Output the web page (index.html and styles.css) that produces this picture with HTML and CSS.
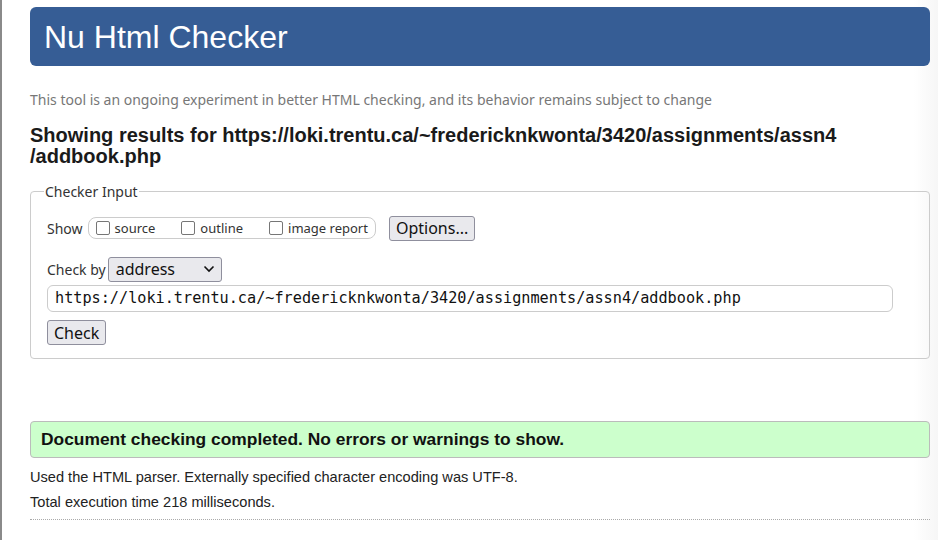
FILE: index.html
```html
<!DOCTYPE html>
<html lang="en">
<head>
<meta charset="utf-8">
<title>Showing results for https://loki.trentu.ca/~fredericknkwonta/3420/assignments/assn4/addbook.php - Nu Html Checker</title>
<link rel="stylesheet" href="styles.css">
</head>
<body>
<div class="page">
  <h1 class="banner">Nu Html Checker</h1>
  <p class="intro">This tool is an ongoing experiment in better HTML checking, and its behavior remains subject to change</p>
  <h2 class="results-title">Showing results for https://loki.trentu.ca/~fredericknkwonta/3420/assignments/assn4<br>/addbook.php</h2>
  <form class="checker">
    <fieldset class="checker-input">
      <legend>Checker Input</legend>
      <div class="row show-row">
        <span class="label">Show</span>
        <span class="show-group">
          <label class="opt"><span class="box"></span>source</label>
          <label class="opt"><span class="box"></span>outline</label>
          <label class="opt"><span class="box"></span>image report</label>
        </span>
        <button type="button" class="btn options">Options...</button>
      </div>
      <div class="row checkby-row">
        <span class="label">Check by</span>
        <span class="select">address
          <svg class="chev" width="12" height="8" viewBox="0 0 12 8"><path d="M1.5 1.5 L6 6 L10.5 1.5" fill="none" stroke="#111" stroke-width="1.6"/></svg>
        </span>
      </div>
      <div class="url">https://loki.trentu.ca/~fredericknkwonta/3420/assignments/assn4/addbook.php</div>
      <button type="button" class="btn check">Check</button>
    </fieldset>
  </form>
  <p class="success">Document checking completed. No errors or warnings to show.</p>
  <p class="details first">Used the HTML parser. Externally specified character encoding was UTF-8.</p>
  <p class="details">Total execution time 218 milliseconds.</p>
  <hr class="dotted">
</div>
</body>
</html>
```
FILE: styles.css
```css
html, body {
  margin: 0;
  padding: 0;
  background: #fff;
}
body {
  font-family: "Liberation Sans", Arial, sans-serif;
  color: #222;
}
.page {
  border-left: 2px solid #8a8a8a;
  min-height: 540px;
  box-sizing: border-box;
  padding: 7px 8px 0 28px;
  background: linear-gradient(to right, #fff 0, #fff calc(100% - 24px), #f6f6f6 100%);
}
.banner {
  margin: 0;
  height: 59px;
  box-sizing: border-box;
  background: #365d95;
  color: #fff;
  border-radius: 6px;
  font-weight: normal;
  font-size: 32px;
  line-height: 60px;
  padding-left: 14px;
}
.intro {
  margin: 24px 0 0;
  font-family: "Noto Sans", "Open Sans", sans-serif;
  font-size: 14px;
  line-height: 19px;
  color: #777;
}
.results-title {
  margin: 16px 0 0;
  font-size: 20px;
  line-height: 21px;
  color: #1a1a1a;
}
.checker { margin: 15px 0 0; }
.checker-input {
  margin: 0;
  border: 1px solid #ccc;
  border-radius: 4px;
  padding: 13px 16px 13px 16px;
  font-family: "Noto Sans", "Open Sans", sans-serif;
  font-size: 14px;
  color: #333;
}
.checker-input legend {
  padding: 0 1px;
  margin-left: -3px;
  font-size: 14px;
}
.row {
  display: flex;
  align-items: center;
}
.show-row { height: 28px; }
.label { margin-right: 5px; }
.show-group {
  display: inline-flex;
  align-items: center;
  height: 22px;
  box-sizing: border-box;
  border: 1px solid #ccc;
  border-radius: 8px;
  padding: 0 7px 0 7px;
  margin-right: 13px;
  font-size: 13px;
}
.opt {
  display: inline-flex;
  align-items: center;
  margin-right: 26px;
}
.opt:last-child { margin-right: 0; }
.box {
  display: inline-block;
  width: 14px;
  height: 14px;
  box-sizing: border-box;
  border: 1px solid #767676;
  border-radius: 2px;
  margin-right: 5px;
  background: #fff;
}
.btn {
  font-family: "Noto Sans", "Open Sans", sans-serif;
  font-size: 16px;
  color: #111;
  background: #e9e9ed;
  border: 1px solid #8f8f9d;
  border-radius: 3px;
  padding: 0 6px;
  height: 25px;
  line-height: 22px;
}
.checkby-row { margin-top: 14px; height: 26px; }
.label-check { margin-right: 2px; }
.select {
  display: inline-flex;
  align-items: center;
  justify-content: space-between;
  box-sizing: border-box;
  width: 114px;
  height: 25px;
  margin-left: -3px;
  border: 1px solid #8f8f9d;
  border-radius: 3px;
  background: #e9e9ed;
  padding: 0 6px 0 7px;
  font-size: 16px;
  color: #111;
}
.url {
  margin-top: 3px;
  width: 846px;
  height: 27px;
  box-sizing: border-box;
  border: 1px solid #ccc;
  border-radius: 6px;
  padding: 0 7px;
  font-family: "DejaVu Sans Mono", monospace;
  font-size: 15.2px;
  line-height: 25px;
  color: #111;
}
.check { margin-top: 8px; display: block; }
.success {
  margin: 62px 0 0;
  height: 37px;
  box-sizing: border-box;
  background: #ccffcc;
  border: 1px solid #bbb;
  border-radius: 4px;
  padding: 0 10px;
  font-weight: bold;
  font-size: 17.4px;
  line-height: 35px;
  color: #111;
}
.details {
  margin: 8px 0 0;
  font-size: 14.6px;
  line-height: 17px;
  color: #222;
}
.details.first { margin-top: 11px; }
.dotted {
  margin: 8px 0 0;
  border: 0;
  border-top: 1px dotted #aaa;
  height: 0;
}
```
